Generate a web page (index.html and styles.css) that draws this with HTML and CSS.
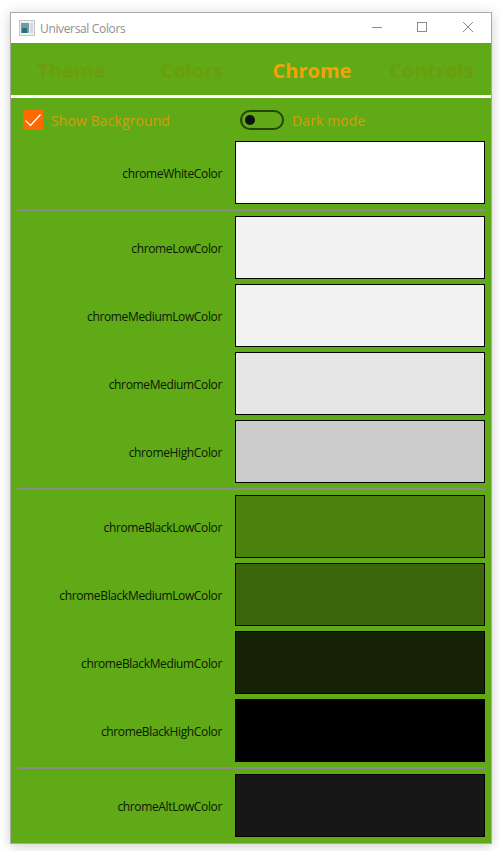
FILE: index.html
```html
<!DOCTYPE html>
<html lang="en">
<head>
    <meta charset="UTF-8">
    <meta name="viewport" content="width=device-width, initial-scale=1.0">
    <title>Universal Colors</title>
    <link rel="stylesheet" href="styles.css">
</head>
<body>
    <div class="window">
        <div class="titlebar">
            <svg class="app-icon" width="16" height="16" viewBox="0 0 16 16">
                <rect x="0.5" y="0.5" width="15" height="15" fill="#eef0f2" stroke="#c4c8cc"/>
                <rect x="2" y="3" width="8" height="10" fill="#6b9da3"/>
                <rect x="3" y="8" width="5" height="5" fill="#2f7078"/>
                <rect x="11" y="3" width="3" height="10" fill="#d5d9dd"/>
            </svg>
            <span class="app-title">Universal Colors</span>
            <div class="caption-buttons">
                <svg width="46" height="30" viewBox="0 0 46 30"><path d="M19 14.5h10" stroke="#8a8a8a" fill="none"/></svg>
                <svg width="46" height="30" viewBox="0 0 46 30"><rect x="18.5" y="9.5" width="9" height="9" stroke="#8a8a8a" fill="none"/></svg>
                <svg width="46" height="30" viewBox="0 0 46 30"><path d="M18 9l10 10M28 9l-10 10" stroke="#8a8a8a" fill="none"/></svg>
            </div>
        </div>
        <div class="tabs">
            <span class="tab">Theme</span>
            <span class="tab">Colors</span>
            <span class="tab active">Chrome</span>
            <span class="tab">Controls</span>
        </div>
        <div class="options">
            <div class="option option-bg">
                <span class="checkbox">
                    <svg width="20" height="20" viewBox="0 0 20 20"><path d="M2.5 10.5l5 5L17.5 4.5" stroke="#fff" stroke-width="1.3" fill="none"/></svg>
                </span>
                <span class="option-text">Show Background</span>
            </div>
            <div class="option">
                <span class="toggle"><span class="knob"></span></span>
                <span class="option-text">Dark mode</span>
            </div>
        </div>
        <div class="colors">
            <div class="group">
                <div class="row"><span class="name">chromeWhiteColor</span><div class="swatch c-white"></div></div>
            </div>
            <div class="group">
                <div class="row"><span class="name">chromeLowColor</span><div class="swatch c-low"></div></div>
                <div class="row"><span class="name">chromeMediumLowColor</span><div class="swatch c-medlow"></div></div>
                <div class="row"><span class="name">chromeMediumColor</span><div class="swatch c-med"></div></div>
                <div class="row"><span class="name">chromeHighColor</span><div class="swatch c-high"></div></div>
            </div>
            <div class="group">
                <div class="row"><span class="name">chromeBlackLowColor</span><div class="swatch c-blacklow"></div></div>
                <div class="row"><span class="name">chromeBlackMediumLowColor</span><div class="swatch c-blackmedlow"></div></div>
                <div class="row"><span class="name">chromeBlackMediumColor</span><div class="swatch c-blackmed"></div></div>
                <div class="row"><span class="name">chromeBlackHighColor</span><div class="swatch c-blackhigh"></div></div>
            </div>
            <div class="group">
                <div class="row"><span class="name">chromeAltLowColor</span><div class="swatch c-altlow"></div></div>
            </div>
        </div>
    </div>
</body>
</html>
```

FILE: styles.css
```css
html, body {
    height: 100%;
}
body {
    margin: 0;
    background: #fff;
    font-family: "Open Sans", "Noto Sans", sans-serif;
    overflow: hidden;
}
.window {
    box-sizing: border-box;
    width: 482px;
    height: 832px;
    margin: 12px 0 0 10px;
    border: 1px solid #a9a9a9;
    background: #60a917;
    box-shadow: 0 2px 12px rgba(0, 0, 0, 0.2);
}
.titlebar {
    display: flex;
    align-items: center;
    height: 30px;
    padding-left: 8px;
    background: #fff;
}
.app-title {
    margin-left: 5px;
    font-size: 12px;
    letter-spacing: -0.35px;
    color: #8f8f8f;
}
.caption-buttons {
    display: flex;
    margin-left: auto;
}
.caption-buttons svg {
    display: block;
}
.tabs {
    box-sizing: border-box;
    display: grid;
    grid-template-columns: 121px 120px 120px 119px;
    height: 55px;
    padding-top: 2px;
    align-items: center;
    border-bottom: 3px solid #fff;
}
.tab {
    text-align: center;
    font-size: 20px;
    font-weight: 700;
    color: #6c9e0c;
}
.tab.active {
    color: #f0a30a;
}
.options {
    display: flex;
    height: 43px;
    padding-left: 12px;
    align-items: center;
    font-size: 14px;
    color: #d99c0a;
}
.option {
    display: flex;
    align-items: center;
}
.option-bg {
    width: 217px;
}
.option-text {
    padding-top: 2px;
    letter-spacing: 0.1px;
}
.checkbox {
    display: block;
    width: 20px;
    height: 20px;
    margin-right: 8px;
    background: #ff6a00;
}
.checkbox svg {
    display: block;
}
.toggle {
    box-sizing: border-box;
    display: flex;
    align-items: center;
    width: 44px;
    height: 20px;
    margin-right: 8px;
    padding-left: 3px;
    border: 2px solid #26450a;
    border-radius: 10px;
}
.knob {
    width: 10px;
    height: 10px;
    border-radius: 50%;
    background: #111;
}
.colors {
    padding: 0 6px 0 6px;
}
.group {
    display: flex;
    flex-direction: column;
    gap: 5px;
    padding-bottom: 5px;
    margin-bottom: 5px;
    border-bottom: 2px solid #8a8a8a;
}
.group:last-child {
    border-bottom: 0;
}
.row {
    display: flex;
    align-items: center;
    justify-content: flex-end;
}
.name {
    padding-top: 2px;
    margin-right: 13px;
    font-size: 12px;
    letter-spacing: -0.36px;
    color: #0c1805;
}
.swatch {
    box-sizing: border-box;
    width: 250px;
    height: 63px;
    border: 1px solid #000;
}
.c-white { background: #fff; }
.c-low { background: #f2f2f2; }
.c-medlow { background: #f2f2f2; }
.c-med { background: #e6e6e6; }
.c-high { background: #cccccc; }
.c-blacklow { background: #4c830f; }
.c-blackmedlow { background: #3c660b; }
.c-blackmed { background: #152205; }
.c-blackhigh { background: #000; }
.c-altlow { background: #171717; }
```
